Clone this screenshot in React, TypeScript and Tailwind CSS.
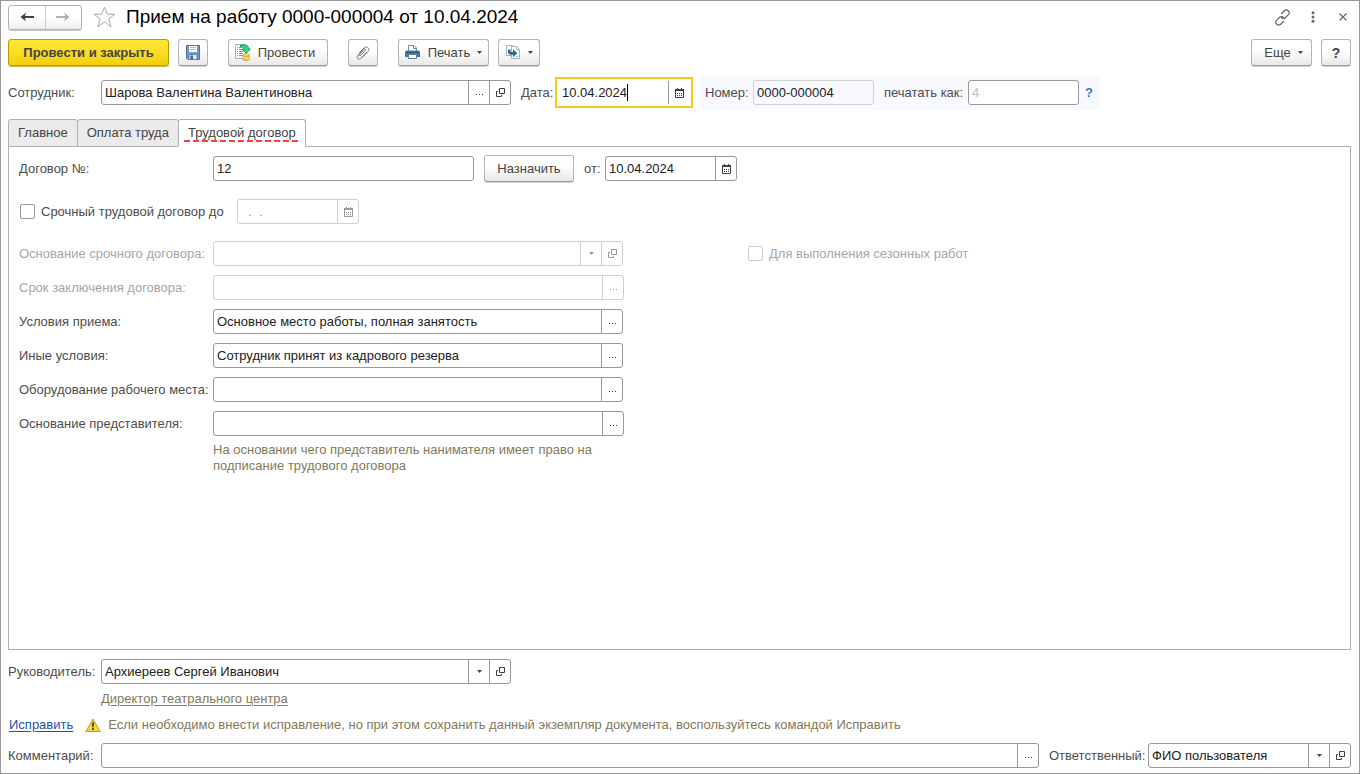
import { useState } from "react";
import type { ReactNode } from "react";

const cellBase = "flex w-[21px] shrink-0 items-center justify-center border-l";

function CalendarIcon() {
  return (
    <svg width="9" height="10" viewBox="0 0 9 10" fill="none" stroke="currentColor" aria-hidden="true">
      <path d="M0.5 2.5h8v7h-8z" />
      <path d="M0 1.5h9M0 2.5h9M2.5 0v2M6.5 0v2" />
      <path d="M2 5.500h1M4 5.500h1M6 5.500h1M2 7.500h1M4 7.500h1M6 7.500h1" />
    </svg>
  );
}

function OpenIcon() {
  return (
    <svg width="9" height="9" viewBox="0 0 9 9" fill="none" stroke="currentColor" aria-hidden="true">
      <path d="M3.500 0.500h5v5h-5z" />
      <path d="M2 3.500H0.500v5h5V7" />
    </svg>
  );
}

function Caret() {
  return (
    <svg width="5" height="3" viewBox="0 0 5 3" aria-hidden="true">
      <path d="M0 0h5L2.500 3z" fill="currentColor" />
    </svg>
  );
}

function Dots() {
  return (
    <svg width="9" height="9" viewBox="0 0 9 9" aria-hidden="true">
      <path d="M1 6h1v1H1zM4 6h1v1H4zM7 6h1v1H7z" fill="currentColor" />
    </svg>
  );
}

type CellKind = "dots" | "open" | "calendar";

const cellIcons: Record<CellKind, ReactNode> = {
  dots: <Dots />,
  open: <OpenIcon />,
  calendar: <CalendarIcon />,
};

const cellTitles: Record<CellKind, string> = {
  dots: "Выбрать",
  open: "Открыть",
  calendar: "Календарь",
};

function Cell({ kind, disabled }: { kind: CellKind; disabled?: boolean }) {
  return (
    <button
      type="button"
      disabled={disabled}
      aria-label={cellTitles[kind]}
      className={`${cellBase} ${disabled ? "border-[#d0d0d0] text-[#999]" : "border-[#999] text-[#404040]"}`}
    >
      {cellIcons[kind]}
    </button>
  );
}

interface FieldProps {
  id: string;
  label?: string;
  value?: string;
  placeholder?: string;
  cells?: CellKind[];
  options?: string[];
  disabled?: boolean;
  className?: string;
}

function Field({ id, label, value = "", placeholder, cells = [], options, disabled, className = "" }: FieldProps) {
  const tone = disabled ? "border-[#d0d0d0]" : "border-[#999]";
  return (
    <div className={`flex h-[25px] min-w-0 rounded-[3px] border bg-white ${tone} ${className}`}>
      {options ? (
        <div className="relative flex min-w-0 flex-1">
          <select
            id={id}
            disabled={disabled}
            defaultValue={value}
            className="w-full min-w-0 appearance-none bg-transparent pr-6 pl-[3px] text-[#222] outline-none"
          >
            {options.map((o) => (
              <option key={o}>{o}</option>
            ))}
          </select>
          <span
            className={`${cellBase} pointer-events-none absolute inset-y-0 right-0 ${tone} ${disabled ? "text-[#999]" : "text-[#404040]"}`}
          >
            <Caret />
          </span>
        </div>
      ) : (
        <input
          id={id}
          type="text"
          aria-label={label}
          disabled={disabled}
          defaultValue={value}
          placeholder={placeholder}
          className="w-full min-w-0 flex-1 bg-transparent px-[3px] text-[#222] outline-none placeholder:text-[#c0c0c0] disabled:text-[#999]"
        />
      )}
      {cells.map((c) => (
        <Cell key={c} kind={c} disabled={disabled} />
      ))}
    </div>
  );
}

function ToolButton({ children, className = "", label }: { children: ReactNode; className?: string; label?: string }) {
  return (
    <button
      type="button"
      aria-label={label}
      className={`flex h-[27px] shrink-0 items-center justify-center rounded-[3px] border border-[#b4b4b4] border-b-[#999] bg-linear-to-b from-white from-40% to-[#e8e8e8] text-[#444] shadow-[0_1px_0_#d4d4d4] ${className}`}
    >
      {children}
    </button>
  );
}

function FloppyIcon() {
  return (
    <svg width="14" height="15" viewBox="0 0 14 15" aria-hidden="true">
      <path d="M0.500 0.500h13v14H2L0.500 13z" fill="#6d9bd0" stroke="#4c76a6" />
      <path d="M3 1h8v6H3z" fill="#fff" />
      <path d="M4 2.500h6M4 4.500h6" stroke="#a9bdd2" />
      <path d="M3 9.500h8v5H3z" fill="#dfe6ed" stroke="#4c6f94" strokeWidth="0.700" />
      <path d="M4.500 10.500h2.500v4H4.500z" fill="#40658f" />
    </svg>
  );
}

function PostIcon() {
  return (
    <svg width="16" height="17" viewBox="0 0 16 17" aria-hidden="true">
      <path d="M0.500 0.500h10v14h-10z" fill="#fff" stroke="#9fb3c2" />
      <path d="M2 3.500h1M2 5.500h1M2 7.500h1M2 9.500h1M2 11.500h1M4 3.500h3M4 5.500h3M4 7.500h4M4 9.500h4M4 11.500h4" stroke="#7c95a7" />
      <path d="M5.500 1h4.800c2.300 0 3.200 1.400 3.200 4h2L11.200 9.300 7 5h2.300C9.300 3.300 8.500 2.700 5.500 2.700z" fill="#3ad880" stroke="#0b9a4d" strokeWidth="0.900" />
      <path d="M8 11v4c0 2 6.500 2 6.500 0v-4z" fill="#edc642" stroke="#c4931b" strokeWidth="0.600" />
      <path d="M8 13c0 1.700 6.500 1.700 6.500 0" fill="none" stroke="#fff0a8" strokeWidth="0.800" />
      <ellipse cx="11.250" cy="11" rx="3.250" ry="1.200" fill="#fce27a" stroke="#c4931b" strokeWidth="0.600" />
    </svg>
  );
}

function ClipIcon() {
  return (
    <svg width="14" height="14" viewBox="0 0 14 14" fill="none" stroke="#777" strokeLinecap="round" aria-hidden="true">
      <path d="M4.600 9.400 9.200 4.600c1-1-.3-2.200-1.300-1.200L2 9.200c-2.300 2.500.8 5.300 3.200 3.200l6.800-7c2.400-2.700-1-6-3.700-3.600L3.600 6.300" />
      <path d="M4.600 9.400c-.9.900-2-.2-1.200-1.100L7 4.600M6.200 10.800l4.500-4.700" />
    </svg>
  );
}

function PrinterIcon() {
  return (
    <svg width="15" height="15" viewBox="0 0 15 15" aria-hidden="true">
      <path d="M3.500 6V0.500h5.500l2.500 2.500V6" fill="#fff" stroke="#6b8ba6" />
      <path d="M8.500 0.500v3h3" fill="none" stroke="#6b8ba6" />
      <path d="M1.500 5.500h12q1.500 0 1.500 1.500V12H0V7Q0 5.500 1.500 5.500z" fill="#4577a3" />
      <path d="M1 7.500h13" stroke="#285375" />
      <path d="M3.500 9.500h8v4h-8z" fill="#fff" stroke="#5f7f9b" />
    </svg>
  );
}

function BasedOnIcon() {
  return (
    <svg width="15" height="15" viewBox="0 0 15 15" aria-hidden="true">
      <path d="M0.500 0.500h6l2 2v8h-8z" fill="#fff" stroke="#9db3c4" />
      <path d="M5.500 1.500h5l3 3v9h-8z" fill="#fff" stroke="#9db3c4" />
      <path d="M10.500 1.500v3h3M9.500 11.500h3" fill="none" stroke="#b4c5d2" />
      <path d="M2 4.500h2.500V6c0 .8.300 1 1 1H7V4.300L11.300 8.300 7 12.200V9.700H5C3 9.700 2 8.800 2 7z" fill="#2b6893" />
    </svg>
  );
}

function Arrow({ flip }: { flip?: boolean }) {
  return (
    <svg width="14" height="10" viewBox="0 0 14 10" aria-hidden="true">
      <path
        d={flip ? "M0 5h10" : "M14 5H4"}
        fill="none"
        stroke={flip ? "#b0b0b0" : "#404040"}
        strokeWidth="2"
      />
      <path
        d={flip ? "M8 0.500 13.500 5 8 9.500l1.500-4.500z" : "M6 0.500 0.500 5 6 9.500 4.500 5z"}
        fill={flip ? "#b0b0b0" : "#404040"}
      />
    </svg>
  );
}

const tabs = ["Главное", "Оплата труда", "Трудовой договор"];

const rowLabel = "w-[194px] shrink-0 whitespace-nowrap";

export default function App() {
  const [active, setActive] = useState(2);

  return (
    <main className="flex min-h-screen flex-col border border-[#999] bg-white pt-1 pr-2 pb-[5px] pl-[7px] font-['Liberation_Sans',Arial,sans-serif] text-[13px] leading-4 text-[#4d4d4d]">
      <header className="flex h-6 items-center">
        <div className="flex h-[25px] w-[74px] shrink-0 rounded-[3px] border border-[#b0b0b0] bg-linear-to-b from-white from-50% to-[#eee] shadow-[0_1px_0_#ccc]">
          <button type="button" aria-label="Назад" className="flex flex-1 items-center justify-center">
            <Arrow />
          </button>
          <button type="button" aria-label="Вперед" className="flex flex-1 items-center justify-center border-l border-[#ccc]">
            <Arrow flip />
          </button>
        </div>
        <button type="button" aria-label="В избранное" className="ml-[11px] shrink-0">
          <svg width="23" height="22" viewBox="0 0 23 22" fill="#fff" stroke="#aaa" aria-hidden="true">
            <path d="M11.500 1.200 14.200 8.200H22l-6.300 4.700 2.300 7.700-6.500-4.700L5 20.600l2.300-7.700L1 8.200h7.800z" />
          </svg>
        </button>
        <h1 className="ml-2.5 text-[19px] leading-6 whitespace-nowrap text-black">Прием на работу 0000-000004 от 10.04.2024</h1>
        <div className="ml-auto flex items-center text-[#666]">
          <button type="button" aria-label="Получить ссылку">
            <svg width="17" height="17" viewBox="0 0 17 17" fill="none" stroke="currentColor" strokeWidth="1.200" strokeLinecap="round" aria-hidden="true">
              <path d="M7.600 4.500l2.500-2.500c2.800-2.800 7 .8 4.300 3.700l-3 3c-1.300 1.200-3 1-4-.2" />
              <path d="M9.400 12.500l-2.500 2.500c-2.800 2.800-7-.8-4.300-3.700l3-3c1.300-1.200 3-1 4 .2" />
            </svg>
          </button>
          <button type="button" aria-label="Меню" className="ml-5">
            <svg width="4" height="12" viewBox="0 0 4 12" fill="currentColor" aria-hidden="true">
              <circle cx="2" cy="1.700" r="1.500" />
              <circle cx="2" cy="6" r="1.500" />
              <circle cx="2" cy="10.300" r="1.500" />
            </svg>
          </button>
          <button type="button" aria-label="Закрыть" className="mr-1 ml-6">
            <svg width="8" height="8" viewBox="0 0 8 8" stroke="currentColor" strokeWidth="1.200" aria-hidden="true">
              <path d="M0.500 0.500l7 7M7.500 0.500l-7 7" />
            </svg>
          </button>
        </div>
      </header>

      <div className="mt-2.5 flex items-center">
        <button
          type="button"
          className="h-[27px] w-[161px] shrink-0 rounded-[3px] border border-[#b89b00] bg-linear-to-b from-[#ffe838] to-[#f2d000] font-bold whitespace-nowrap text-[#444] shadow-[0_1px_0_#c9b64c]"
        >
          Провести и закрыть
        </button>
        <ToolButton label="Записать" className="ml-[9px] w-[30px]">
          <FloppyIcon />
        </ToolButton>
        <ToolButton className="ml-5 w-[100px] gap-[7px] pr-1.5">
          <PostIcon />
          Провести
        </ToolButton>
        <ToolButton label="Файлы" className="ml-5 w-[30px]">
          <ClipIcon />
        </ToolButton>
        <ToolButton className="ml-5 w-[91px]">
          <PrinterIcon />
          <span className="mr-[7px] ml-2">Печать</span>
          <Caret />
        </ToolButton>
        <ToolButton label="Создать на основании" className="ml-[9px] w-[42px] gap-[7px]">
          <BasedOnIcon />
          <Caret />
        </ToolButton>
        <ToolButton className="ml-auto w-[61px] gap-[7px] pl-1">
          Еще
          <Caret />
        </ToolButton>
        <ToolButton className="ml-[9px] w-[30px] text-[14px] font-bold">?</ToolButton>
      </div>

      <div className="mt-[9px] flex h-[35px] items-center">
        <label htmlFor="employee" className="w-[93px] shrink-0">
          Сотрудник:
        </label>
        <Field id="employee" value="Шарова Валентина Валентиновна" cells={["dots", "open"]} className="w-[410px]" />
        <label htmlFor="date" className="ml-2.5 w-[34px] shrink-0">
          Дата:
        </label>
        <div className="relative flex h-[31px] w-[138px] shrink-0 border-2 border-[#f8cb1c] py-0.5 pr-0.5">
          <input id="date" type="text" defaultValue="10.04.2024" className="w-full min-w-0 flex-1 pl-[5px] text-[#222] outline-none" />
          <span className="absolute top-[5px] left-[70px] h-[17px] w-px bg-black" />
          <Cell kind="calendar" />
        </div>
        <div className="ml-[7px] flex h-[35px] shrink-0 items-center bg-[#f8f8ff] pr-[7px] pl-[5px]">
          <label htmlFor="number" className="w-12">
            Номер:
          </label>
          <input
            id="number"
            type="text"
            readOnly
            defaultValue="0000-000004"
            className="h-[25px] w-[121px] rounded-[3px] border border-[#d0d0d0] bg-transparent px-[3px] text-[#222] outline-none"
          />
          <label htmlFor="print-as" className="ml-2.5 w-[84px] whitespace-nowrap">
            печатать как:
          </label>
          <Field id="print-as" placeholder="4" className="w-[111px]" />
          <button type="button" aria-label="Подсказка" className="ml-1.5 w-2 font-bold text-[#1b7fc4]">
            ?
          </button>
        </div>
      </div>

      <div role="tablist" className="relative z-10 mt-[9px] flex h-7">
        {tabs.map((t, i) => (
          <button
            key={t}
            type="button"
            role="tab"
            aria-selected={i === active}
            onClick={() => setActive(i)}
            className={`relative -mr-px rounded-t-[3px] border border-[#b0b0b0] px-[9px] whitespace-nowrap text-[#444] ${
              i === active ? "border-b-white bg-white" : "bg-[#ebebeb]"
            }`}
          >
            {t}
            {i === 2 && (
              <svg className="absolute bottom-1 left-[5px] h-0.5 w-[117px]" aria-hidden="true">
                <path d="M0 1h117" stroke="#ff3b3b" strokeWidth="2" strokeDasharray="6 3" />
              </svg>
            )}
          </button>
        ))}
      </div>

      <section className="-mt-px flex-1 border border-[#b0b0b0] px-2.5 pt-2">
        <div className="flex h-[27px] items-center">
          <label htmlFor="contract" className={rowLabel}>
            Договор №:
          </label>
          <Field id="contract" value="12" className="w-[261px]" />
          <ToolButton className="ml-2.5 w-[90px]">Назначить</ToolButton>
          <label htmlFor="contract-date" className="ml-2.5 w-[21px]">
            от:
          </label>
          <Field id="contract-date" value="10.04.2024" cells={["calendar"]} className="w-[132px]" />
        </div>

        <div className="mt-[17px] flex h-[25px] items-center">
          <input id="fixed" type="checkbox" className="ml-px size-[15px] shrink-0 appearance-none rounded-[2px] border border-[#999] bg-white" />
          <label htmlFor="fixed" className="ml-1.5 w-[196px] whitespace-nowrap">
            Срочный трудовой договор до
          </label>
          <Field
            id="fixed-date"
            label="Дата окончания договора"
            value={"\u00a0\u00a0.\u00a0\u00a0."}
            cells={["calendar"]}
            disabled
            className="w-[122px]"
          />
        </div>

        <div className="mt-[17px] flex flex-col gap-[9px]">
          <div className="flex items-center">
            <label htmlFor="term-reason" className={`${rowLabel} text-[#a6a6a6]`}>
              Основание срочного договора:
            </label>
            <Field id="term-reason" options={[""]} cells={["open"]} disabled className="w-[410px]" />
            <input
              id="seasonal"
              type="checkbox"
              disabled
              className="ml-[125px] size-[15px] shrink-0 appearance-none rounded-[2px] border border-[#ccc] bg-white"
            />
            <label htmlFor="seasonal" className="ml-1.5 whitespace-nowrap text-[#a6a6a6]">
              Для выполнения сезонных работ
            </label>
          </div>
          <div className="flex items-center">
            <label htmlFor="term" className={`${rowLabel} text-[#a6a6a6]`}>
              Срок заключения договора:
            </label>
            <Field id="term" cells={["dots"]} disabled className="w-[411px]" />
          </div>
          <div className="flex items-center">
            <label htmlFor="terms" className={rowLabel}>
              Условия приема:
            </label>
            <Field id="terms" value="Основное место работы, полная занятость" cells={["dots"]} className="w-[410px]" />
          </div>
          <div className="flex items-center">
            <label htmlFor="other" className={rowLabel}>
              Иные условия:
            </label>
            <Field id="other" value="Сотрудник принят из кадрового резерва" cells={["dots"]} className="w-[410px]" />
          </div>
          <div className="flex items-center">
            <label htmlFor="equipment" className={rowLabel}>
              Оборудование рабочего места:
            </label>
            <Field id="equipment" cells={["dots"]} className="w-[410px]" />
          </div>
          <div className="flex items-center">
            <label htmlFor="representative" className={rowLabel}>
              Основание представителя:
            </label>
            <Field id="representative" cells={["dots"]} className="w-[411px]" />
          </div>
        </div>
        <p className="mt-1.5 ml-[194px] max-w-[410px] text-[#84795a]">
          На основании чего представитель нанимателя имеет право на подписание трудового договора
        </p>
      </section>

      <div className="mt-[9px] flex items-center">
        <label htmlFor="manager" className="w-[93px] shrink-0 whitespace-nowrap">
          Руководитель:
        </label>
        <Field
          id="manager"
          value="Архиереев Сергей Иванович"
          options={["Архиереев Сергей Иванович"]}
          cells={["open"]}
          className="w-[410px]"
        />
      </div>
      <div className="ml-[93px] flex h-[30px] items-center">
        <a href="#position" className="text-[#84795a] underline underline-offset-2">
          Директор театрального центра
        </a>
      </div>
      <div className="flex h-[22px] items-center">
        <a href="#fix" className="ml-px text-[#1f4fb8] underline underline-offset-2">
          Исправить
        </a>
        <svg className="ml-3 shrink-0" width="16" height="15" viewBox="0 0 16 15" aria-hidden="true">
          <path d="M8 1 15.200 13.500H0.800z" fill="#f2d93a" stroke="#b9a02a" strokeLinejoin="round" />
          <path d="M7 4.500h2l-.4 4.800H7.400zM7.100 10.200h1.800V12H7.100z" fill="#333" />
        </svg>
        <p className="ml-[7px] text-[#84795a]">
          Если необходимо внести исправление, но при этом сохранить данный экземпляр документа, воспользуйтесь командой Исправить
        </p>
      </div>
      <div className="mt-[7px] flex items-center">
        <label htmlFor="comment" className="w-[93px] shrink-0">
          Комментарий:
        </label>
        <Field id="comment" cells={["dots"]} className="flex-1" />
        <label htmlFor="responsible" className="ml-2.5 w-[99px] shrink-0 whitespace-nowrap">
          Ответственный:
        </label>
        <Field id="responsible" value="ФИО пользователя" options={["ФИО пользователя"]} cells={["open"]} className="w-[203px]" />
      </div>
    </main>
  );
}
